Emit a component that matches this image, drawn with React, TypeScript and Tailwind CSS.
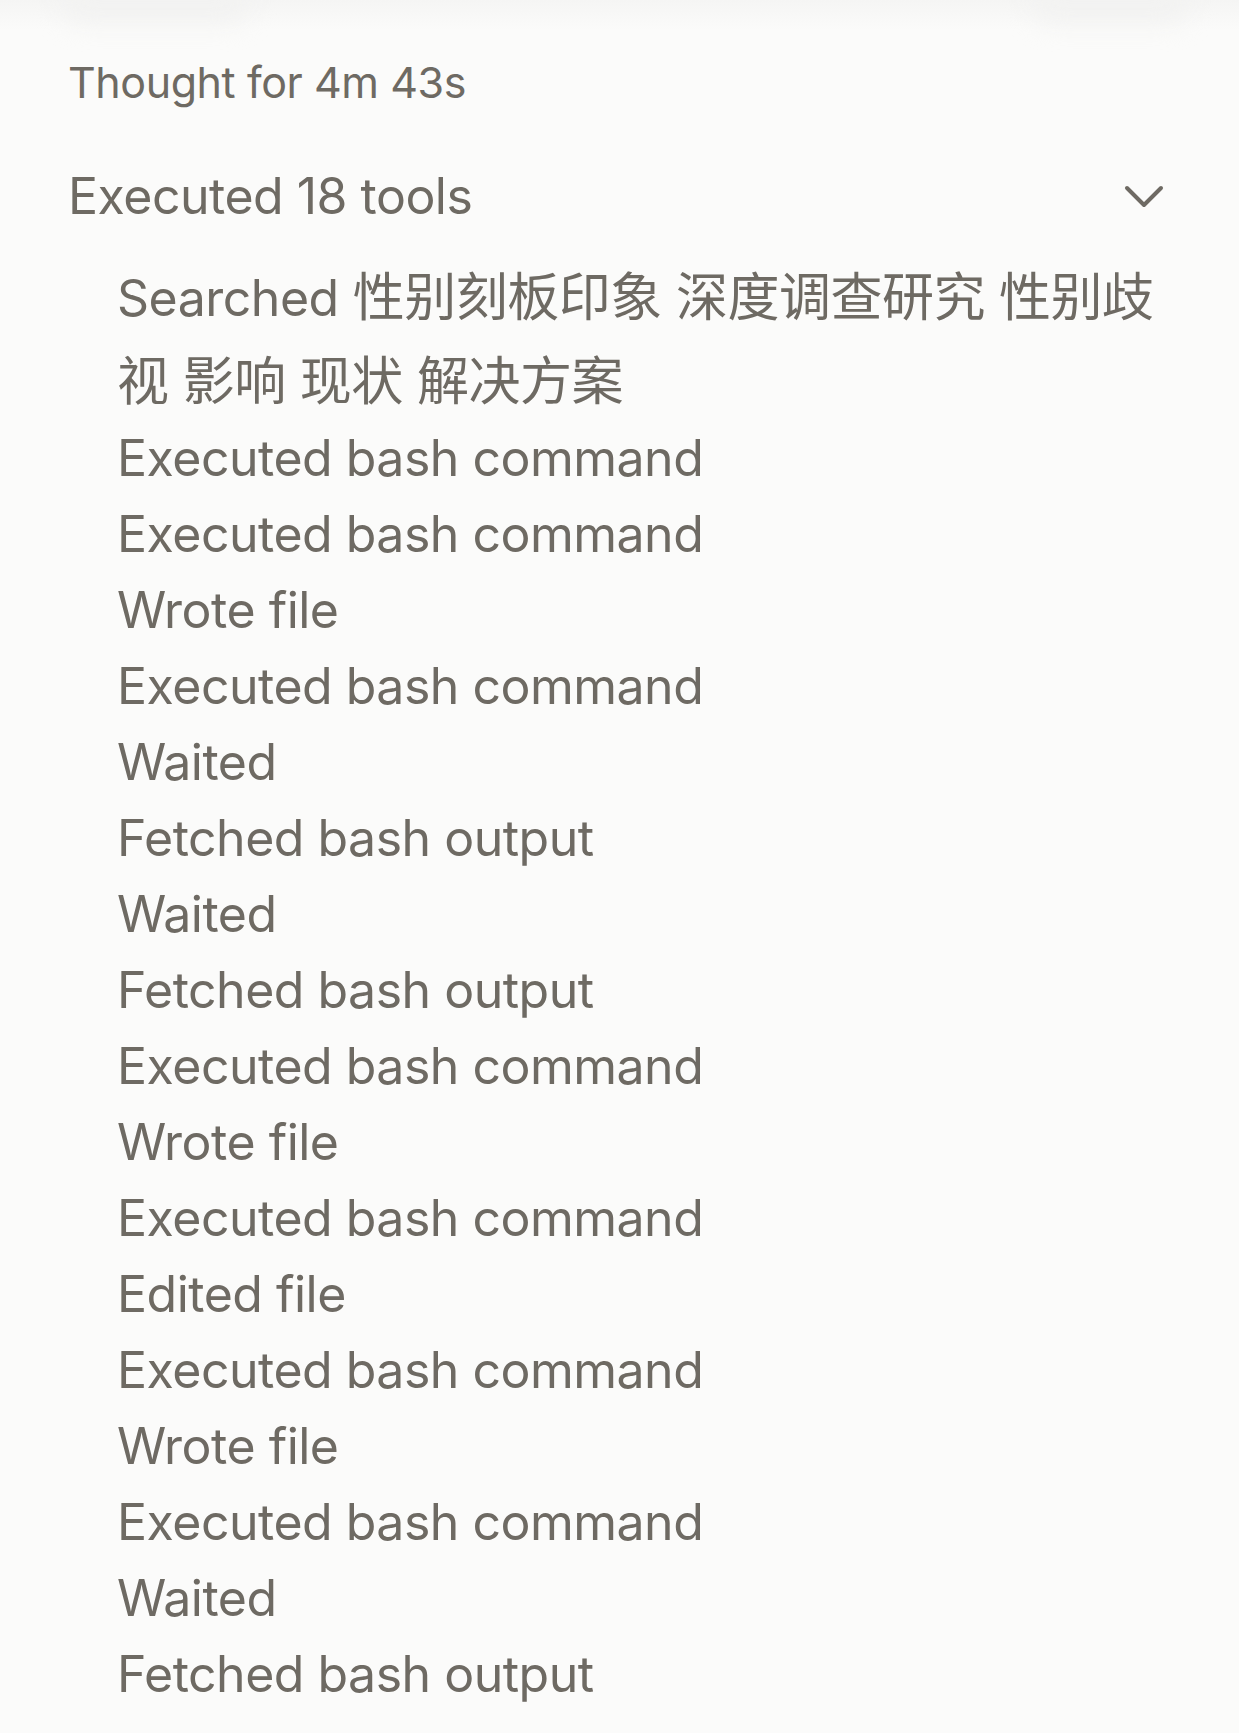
const steps = [
  "Executed bash command",
  "Executed bash command",
  "Wrote file",
  "Executed bash command",
  "Waited",
  "Fetched bash output",
  "Waited",
  "Fetched bash output",
  "Executed bash command",
  "Wrote file",
  "Executed bash command",
  "Edited file",
  "Executed bash command",
  "Wrote file",
  "Executed bash command",
  "Waited",
  "Fetched bash output",
];

export default function App() {
  return (
    <div
      className="relative min-h-[1733px] w-full overflow-hidden bg-[#fbfbfa] text-[#6e6a63]"
      style={{ fontFamily: '"Inter", "Noto Sans CJK SC", sans-serif' }}
    >
      {/* faded content scrolling out at the top */}
      <div className="pointer-events-none absolute inset-x-0 top-0 h-[30px] bg-gradient-to-b from-[#f5f5f4] to-transparent" />
      <div className="pointer-events-none absolute left-[60px] top-[-22px] h-[45px] w-[190px] rounded-full bg-[#f2f2f1] blur-md" />
      <div className="pointer-events-none absolute left-[1030px] top-[-22px] h-[45px] w-[160px] rounded-full bg-[#f2f2f1] blur-md" />

      <div className="relative pt-[52px]">
        <p className="pl-[68px] text-[43px] leading-[60px] tracking-[-0.01em]">Thought for 4m 43s</p>

        <button className="mt-[54px] flex w-full items-center justify-between pl-[68px] pr-[74px] text-left">
          <span className="text-[50px] leading-[60px] tracking-[-0.01em]">Executed 18 tools</span>
          <svg width="42" height="26" viewBox="0 0 42 26" fill="none" stroke="currentColor" strokeWidth="4" strokeLinecap="round" strokeLinejoin="round">
            <polyline points="4,5 21,22 38,5" />
          </svg>
        </button>

        <ul className="mt-[30px] pl-[117px] pr-[50px] text-[50px] tracking-[-0.01em]">
          {/* query text runs a touch larger than the latin label */}
          <li className="-mb-[4px] text-[52px] leading-[84px]">
            <span className="text-[50px]">Searched</span> 性别刻板印象 深度调查研究 性别歧视 影响 现状 解决方案
          </li>
          {steps.map((s, i) => (
            <li key={i} className="leading-[76px]">
              {s}
            </li>
          ))}
        </ul>
      </div>
    </div>
  );
}
